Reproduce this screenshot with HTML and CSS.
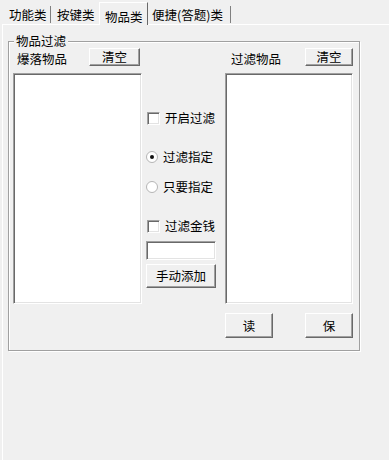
FILE: index.html
```html
<!DOCTYPE html>
<html>
<head>
<meta charset="utf-8">
<link rel="stylesheet" href="styles.css">
</head>
<body>
<div class="tabs">
  <div class="tab t1">功能类</div>
  <div class="tab t2">按键类</div>
  <div class="tab active">物品类</div>
  <div class="tab t4">便捷(答题)类</div>
</div>
<div class="panel">
  <div class="group">
    <div class="legend">物品过滤</div>
    <div class="main">
      <div class="col col-left">
        <div class="col-head">
          <span class="label l-left">爆落物品</span>
          <button class="btn btn-clear-l">清空</button>
        </div>
        <div class="listbox"></div>
      </div>
      <div class="col-mid">
        <label class="opt r1"><span class="check"></span><span class="opt-text">开启过滤</span></label>
        <label class="opt r2"><svg class="radio" width="12" height="12" viewBox="0 0 12 12"><circle cx="6" cy="6" r="5.5" fill="#fff" stroke="#b4b4b4"/><circle cx="6" cy="6" r="2" fill="#111"/></svg><span class="opt-text rt">过滤指定</span></label>
        <label class="opt r3"><svg class="radio" width="12" height="12" viewBox="0 0 12 12"><circle cx="6" cy="6" r="5.5" fill="#fff" stroke="#b4b4b4"/></svg><span class="opt-text rt">只要指定</span></label>
        <label class="opt r4"><span class="check"></span><span class="opt-text">过滤金钱</span></label>
        <div class="textbox"></div>
        <button class="btn btn-add">手动添加</button>
      </div>
      <div class="col col-right">
        <div class="col-head">
          <span class="label l-right">过滤物品</span>
          <button class="btn btn-clear-r">清空</button>
        </div>
        <div class="listbox"></div>
      </div>
    </div>
    <div class="foot">
      <button class="btn btn-foot">读</button>
      <button class="btn btn-foot">保</button>
    </div>
  </div>
</div>
</body>
</html>
```
FILE: styles.css
```css
* { box-sizing: border-box; }
html, body { margin: 0; padding: 0; }
body {
  width: 389px;
  height: 460px;
  overflow: hidden;
  background: #f0f0f0;
  font-family: "Noto Sans CJK SC", "DejaVu Sans", sans-serif;
  font-size: 12.5px;
  color: #000;
}
.tabs {
  display: flex;
  height: 24px;
  padding-left: 3px;
  align-items: flex-end;
  position: relative;
  z-index: 1;
}
.tab {
  height: 17px;
  line-height: 18px;
  border-right: 1px solid #808080;
  margin-bottom: 1px;
}
.t1 { width: 48px; padding-left: 6px; }
.t2 { width: 48px; padding-left: 6px; border-right: none; }
.t4 { width: 83px; padding-left: 4px; }
.tab.active {
  height: 23px;
  width: 49px;
  padding-left: 5px;
  padding-top: 5px;
  line-height: 17px;
  margin-bottom: -1px;
  background: #f0f0f0;
  border-top: 1px solid #fff;
  border-left: 1px solid #fff;
  border-right: 1px solid #696969;
}
.panel {
  margin-left: 2px;
  height: 436px;
  border-top: 1px solid #fff;
  border-left: 1px solid #fff;
  padding: 16px 0 0 5px;
}
.group {
  position: relative;
  width: 352px;
  height: 310px;
  border: 1px solid #a0a0a0;
  box-shadow: inset 1px 1px 0 #fff, 1px 1px 0 #fff;
  padding: 6px 0 0 4px;
}
.legend {
  position: absolute;
  left: 5px;
  top: -8px;
  padding: 0 2px;
  line-height: 14px;
  background: #f0f0f0;
}
.main { display: flex; }
.col { display: flex; flex-direction: column; }
.col-left { width: 129px; }
.col-right { width: 128px; margin-left: 9px; }
.col-head {
  height: 18px;
  display: flex;
  justify-content: space-between;
}
.label { padding-top: 4px; line-height: 14px; }
.l-left { margin-left: 4px; }
.l-right { margin-left: 6px; }
.btn {
  font: inherit;
  color: #000;
  background: #f0f0f0;
  margin: 0;
  padding: 0;
  border: 1px solid;
  border-color: #fff #696969 #696969 #fff;
  box-shadow: inset -1px -1px 0 #a0a0a0;
  line-height: 14px;
}
.btn-clear-l { width: 51px; height: 18px; margin-right: 2px; }
.btn-clear-r { width: 48px; height: 18px; }
.listbox {
  margin-top: 7px;
  height: 231px;
  background: #fff;
  border: 1px solid;
  border-color: #a0a0a0 #fff #fff #a0a0a0;
  box-shadow: inset 1px 1px 0 #696969, inset -1px -1px 0 #e3e3e3;
}
.col-mid {
  width: 70px;
  margin-left: 4px;
  display: flex;
  flex-direction: column;
}
.opt {
  display: flex;
  align-items: center;
  height: 16px;
}
.r1 { margin-top: 62px; }
.r2 { margin-top: 23px; }
.r3 { margin-top: 14px; }
.r4 { margin-top: 23px; }
.check {
  width: 13px;
  height: 13px;
  margin-left: 1px;
  background: #fff;
  border: 1px solid;
  border-color: #a0a0a0 #fff #fff #a0a0a0;
  box-shadow: inset 1px 1px 0 #696969, inset -1px -1px 0 #e3e3e3;
  flex: none;
}
.radio { flex: none; display: block; }
.opt-text { margin-left: 5px; line-height: 14px; }
.rt { margin-left: 5px; }
.textbox {
  margin-top: 7px;
  height: 19px;
  width: 70px;
  background: #fff;
  border: 1px solid;
  border-color: #a0a0a0 #fff #fff #a0a0a0;
  box-shadow: inset 1px 1px 0 #696969, inset -1px -1px 0 #e3e3e3;
}
.btn-add { margin-top: 4px; width: 70px; height: 24px; }
.foot {
  display: flex;
  margin-top: 9px;
  padding-left: 212px;
}
.btn-foot { width: 48px; height: 25px; }
.btn-foot + .btn-foot { margin-left: 32px; }
```
